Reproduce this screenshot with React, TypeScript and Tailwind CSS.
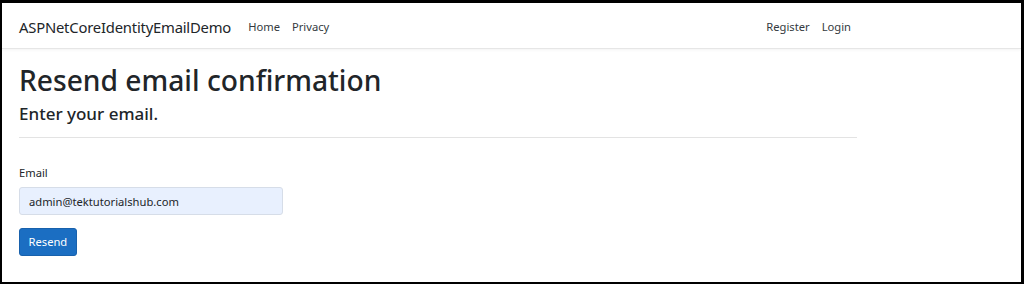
export default function App() {
  return (
    <div
      className="box-border h-[284px] w-[1024px] overflow-hidden border-b-2 border-l-2 border-r-[3px] border-t-[3px] border-black bg-white text-[#212529]"
      style={{ fontFamily: '"Noto Sans", "Open Sans", sans-serif' }}
    >
      {/* Navbar */}
      <header className="h-[46px] border-b border-[#e6e6e6] shadow-[0_1px_3px_rgba(0,0,0,0.05)]">
        <nav className="flex h-full w-[849px] items-center pl-[17px] pt-[4px]">
          <a className="mr-[17px] text-[14.8px] tracking-[-0.2px] text-[#212529]">ASPNetCoreIdentityEmailDemo</a>
          <ul className="flex flex-1 items-center gap-[12px] text-[11.2px] text-[#343a40]">
            <li>Home</li>
            <li>Privacy</li>
          </ul>
          <ul className="flex items-center gap-[12px] text-[11.2px] text-[#343a40]">
            <li>Register</li>
            <li>Login</li>
          </ul>
        </nav>
      </header>

      {/* Main */}
      <main className="w-[855px] pl-[17px] pt-[15px]">
        <h1 className="text-[28.2px] font-medium leading-[1.2]">Resend email confirmation</h1>
        <h4 className="mt-[6px] text-[17px] font-medium leading-[1.2]">Enter your email.</h4>
        <hr className="mt-[13px] border-t border-[#e3e3e3]" />

        <div className="mt-[26px] w-[264px]">
          <label className="block text-[11.2px] leading-[18px] text-[#212529]">Email</label>
          <input
            readOnly
            value="admin@tektutorialshub.com"
            className="mt-[5px] box-border h-[28px] w-full rounded-[3px] border border-[#d6dde8] bg-[#e8f0fe] px-[9px] text-[11.2px] text-[#212529] outline-none"
          />
          <button className="mt-[13px] h-[28px] rounded-[3px] border border-[#1861ac] bg-[#1b6ec2] px-[8.5px] text-[11.2px] text-white">
            Resend
          </button>
        </div>
      </main>
    </div>
  );
}
